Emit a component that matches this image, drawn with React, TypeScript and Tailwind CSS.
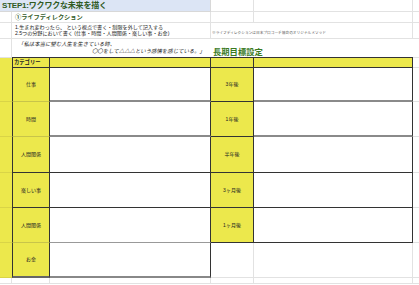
const YELLOW = 'bg-[#ece84c]';

const bodyLeft = [
  { label: '仕事', h: 'h-[34px]', bBot: 'border-b-[#c8c44a]', cBot: 'border-b-[#8a8a8a] border-b-2' },
  { label: '時間', h: 'h-[35px]', bBot: 'border-b-[#c8c44a]', cBot: 'border-b-[#8a8a8a] border-b-2' },
  { label: '人間関係', h: 'h-[36px]', bBot: 'border-b-[#333]', cBot: 'border-b-[#333]' },
  { label: '楽しい事', h: 'h-[35px]', bBot: 'border-b-[#333]', cBot: 'border-b-[#333]' },
  { label: '人間関係', h: 'h-[35px]', bBot: 'border-b-[#c8c44a]', cBot: 'border-b-[#999]' },
  { label: 'お金', h: 'h-[35px]', bBot: 'border-b-[#666] border-b-2', cBot: 'border-b-[#888] border-b-2' },
];

const goals = ['3年後', '1年後', '半年後', '3ヶ月後', '1ヶ月後', ''];

export default function App() {
  return (
    <div className="w-[419px] h-[285px] overflow-hidden bg-white font-['Liberation_Sans','Noto_Sans_CJK_JP',sans-serif] text-[#222]">
      {/* Row 1 - title */}
      <div className="flex h-[12px]">
        <div className="w-[211px] shrink-0 bg-[#dce5f5] border-r border-b border-[#d8d8d8] flex items-center pl-[2px]">
          <span className="text-[8px] leading-none font-bold text-[#2f5a1f] tracking-[-0.2px]">STEP1:ワクワクな未来を描く</span>
        </div>
        <div className="w-[43px] shrink-0 border-r border-b border-[#e2e2e2]" />
        <div className="w-[159px] shrink-0 border-r border-b border-[#e2e2e2]" />
        <div className="flex-1 border-b border-[#e2e2e2]" />
      </div>

      {/* Row 2 - section */}
      <div className="flex h-[11px]">
        <div className="w-[12px] shrink-0 border-r border-b border-[#e2e2e2]" />
        <div className="w-[199px] shrink-0 border-r border-b border-[#e2e2e2] flex items-center pl-[3px]">
          <span className="text-[6.2px] leading-none font-bold text-[#2f5a1f]">①ライフディレクション</span>
        </div>
        <div className="w-[43px] shrink-0 border-r border-b border-[#e2e2e2]" />
        <div className="w-[159px] shrink-0 border-r border-b border-[#e2e2e2]" />
        <div className="flex-1 border-b border-[#e2e2e2]" />
      </div>

      {/* Row 3 - instructions */}
      <div className="flex h-[16px]">
        <div className="w-[12px] shrink-0 border-r border-b border-[#e2e2e2]" />
        <div className="w-[199px] shrink-0 border-r border-b border-[#e2e2e2] flex flex-col justify-center pl-[3px] gap-[1px]">
          <span className="text-[5.1px] leading-none whitespace-nowrap">1.生まれ変わったら、 という視点で書く・制限を外して記入する</span>
          <span className="text-[5.1px] leading-none whitespace-nowrap">2.5つの分野において書く (仕事・時間・人間関係・楽しい事・お金)</span>
        </div>
        <div className="w-[202px] shrink-0 border-r border-b border-[#e2e2e2] flex items-end pl-[1px] pb-[2px]">
          <span className="text-[3.7px] leading-none whitespace-nowrap text-[#555]">※ライフディレクションは日本プロコーチ協会のオリジナルメソッド</span>
        </div>
        <div className="flex-1 border-b border-[#e2e2e2]" />
      </div>

      {/* Row 4 - quote + long term goals title */}
      <div className="flex h-[19px]">
        <div className="w-[12px] shrink-0 border-r border-b border-[#e2e2e2]" />
        <div className="w-[199px] shrink-0 border-b border-[#333] flex flex-col justify-center px-[6px] gap-[2px] italic">
          <span className="text-[5.4px] leading-none whitespace-nowrap">「私は本当に望む人生を生きている時、</span>
          <span className="text-[5.4px] leading-none whitespace-nowrap self-end">〇〇をして△△△という感情を感じている。」</span>
        </div>
        <div className="w-[202px] shrink-0 border-b border-[#333] flex items-end pl-[2px] pb-[1px]">
          <span className="text-[8.3px] leading-none font-bold text-[#3a7a1f]">長期目標設定</span>
        </div>
        <div className="flex-1 border-b border-[#e2e2e2]" />
      </div>

      {/* Header row */}
      <div className="flex h-[10px]">
        <div className={`w-[12px] shrink-0 ${YELLOW}`} />
        <div className={`w-[38px] shrink-0 ${YELLOW} border-x border-b border-[#333] flex items-center pl-[1px]`}>
          <span className="text-[5.3px] leading-none font-bold">カテゴリー</span>
        </div>
        <div className={`w-[161px] shrink-0 ${YELLOW} border-r border-b border-[#333]`} />
        <div className={`w-[43px] shrink-0 ${YELLOW} border-r border-b border-[#333]`} />
        <div className={`w-[159px] shrink-0 ${YELLOW} border-r border-b border-[#333]`} />
        <div className="flex-1 border-b border-[#e2e2e2]" />
      </div>

      {/* Body rows */}
      {bodyLeft.map((row, i) => {
        const goal = goals[i];
        return (
          <div key={i} className={`flex ${row.h}`}>
            <div className={`w-[12px] shrink-0 ${YELLOW} border-b border-[#d9d447]`} />
            <div className={`w-[38px] shrink-0 ${YELLOW} border-x border-b border-x-[#333] ${row.bBot} flex items-center justify-center`}>
              <span className="text-[5px] leading-none">{row.label}</span>
            </div>
            <div className={`w-[161px] shrink-0 border-r border-b border-r-[#333] ${row.cBot}`} />
            {goal ? (
              <>
                <div className={`w-[43px] shrink-0 ${YELLOW} border-r border-b border-[#333] flex items-center justify-center`}>
                  <span className="text-[5px] leading-none">{goal}</span>
                </div>
                <div className={`w-[159px] shrink-0 border-r border-b border-r-[#333] ${i === 0 || i === 1 ? 'border-b-2 border-b-[#8a8a8a]' : 'border-b-[#333]'}`} />
              </>
            ) : (
              <>
                <div className="w-[43px] shrink-0 border-r border-b border-[#e2e2e2]" />
                <div className="w-[159px] shrink-0 border-r border-b border-[#e2e2e2]" />
              </>
            )}
            <div className="flex-1 border-b border-[#e2e2e2]" />
          </div>
        );
      })}

      {/* Trailing empty row */}
      <div className="flex h-[6px]">
        <div className="w-[12px] shrink-0 border-r border-b border-[#e2e2e2]" />
        <div className="w-[38px] shrink-0 border-r border-b border-[#e2e2e2]" />
        <div className="w-[161px] shrink-0 border-r border-b border-[#e2e2e2]" />
        <div className="w-[43px] shrink-0 border-r border-b border-[#e2e2e2]" />
        <div className="w-[159px] shrink-0 border-r border-b border-[#e2e2e2]" />
        <div className="flex-1 border-b border-[#e2e2e2]" />
      </div>
    </div>
  );
}
